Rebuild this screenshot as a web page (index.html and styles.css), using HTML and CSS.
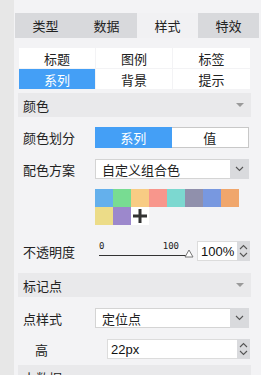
FILE: index.html
```html
<!DOCTYPE html>
<html lang="zh-CN">
<head>
  <meta charset="UTF-8" />
  <title>样式</title>
  <link rel="stylesheet" href="styles.css">
</head>
<body>
  <div class="app">
    <div class="rail"></div>

    <div class="panel">
      <div class="tabs">
        <div class="tab">类型</div>
        <div class="tab">数据</div>
        <div class="tab active">样式</div>
        <div class="tab">特效</div>
      </div>

      <div class="subtabs">
        <div class="subtab">标题</div>
        <div class="subtab">图例</div>
        <div class="subtab">标签</div>
        <div class="subtab active">系列</div>
        <div class="subtab">背景</div>
        <div class="subtab">提示</div>
      </div>

      <div class="section-head">
        <span>颜色</span>
        <span class="caret"></span>
      </div>

      <div class="row row-toggle">
        <div class="label">颜色划分</div>
        <div class="toggle">
          <div class="toggle-item active">系列</div>
          <div class="toggle-item">值</div>
        </div>
      </div>

      <div class="row row-select">
        <div class="label">配色方案</div>
        <div class="select">
          <div class="select-value">自定义组合色</div>
          <div class="select-arrow">
            <svg width="9" height="6" viewBox="0 0 9 6"><path d="M1 1l3.5 3.5L8 1" fill="none" stroke="#555" stroke-width="1.1"/></svg>
          </div>
        </div>
      </div>

      <div class="swatches">
        <div class="swatch" style="background:#64b0ec"></div>
        <div class="swatch" style="background:#78dc92"></div>
        <div class="swatch" style="background:#f8cc84"></div>
        <div class="swatch" style="background:#f8968c"></div>
        <div class="swatch" style="background:#7cd8d0"></div>
        <div class="swatch" style="background:#9090ac"></div>
        <div class="swatch" style="background:#7898e0"></div>
        <div class="swatch" style="background:#f0a66c"></div>
        <div class="swatch" style="background:#ecdc88"></div>
        <div class="swatch" style="background:#9c88cc"></div>
        <div class="swatch add">
          <svg width="14" height="14" viewBox="0 0 14 14"><path d="M7 0v14M0 7h14" stroke="#333" stroke-width="3"/></svg>
        </div>
      </div>

      <div class="row row-opacity">
        <div class="label">不透明度</div>
        <div class="slider">
          <div class="slider-nums"><span>0</span><span>100</span></div>
          <div class="slider-track">
            <svg class="thumb" width="10" height="9" viewBox="0 0 10 9"><path d="M5 1L9 8H1z" fill="#fff" stroke="#777"/></svg>
          </div>
        </div>
        <div class="spin spin-small">
          <div class="spin-value">100%</div>
          <div class="spin-btns">
            <svg width="9" height="6" viewBox="0 0 9 6"><path d="M1 5l3.5-3.5L8 5" fill="none" stroke="#555" stroke-width="1.1"/></svg>
            <svg width="9" height="6" viewBox="0 0 9 6"><path d="M1 1l3.5 3.5L8 1" fill="none" stroke="#555" stroke-width="1.1"/></svg>
          </div>
        </div>
      </div>

      <div class="section-head">
        <span>标记点</span>
        <span class="caret"></span>
      </div>

      <div class="row row-select">
        <div class="label">点样式</div>
        <div class="select">
          <div class="select-value">定位点</div>
          <div class="select-arrow">
            <svg width="9" height="6" viewBox="0 0 9 6"><path d="M1 1l3.5 3.5L8 1" fill="none" stroke="#555" stroke-width="1.1"/></svg>
          </div>
        </div>
      </div>

      <div class="row row-height">
        <div class="label sub">高</div>
        <div class="spin spin-wide">
          <div class="spin-value">22px</div>
          <div class="spin-btns">
            <svg width="9" height="6" viewBox="0 0 9 6"><path d="M1 5l3.5-3.5L8 5" fill="none" stroke="#555" stroke-width="1.1"/></svg>
            <svg width="9" height="6" viewBox="0 0 9 6"><path d="M1 1l3.5 3.5L8 1" fill="none" stroke="#555" stroke-width="1.1"/></svg>
          </div>
        </div>
      </div>

      <div class="section-head">
        <span>上数据</span>
        <span class="caret"></span>
      </div>
    </div>
  </div>
</body>
</html>
```

FILE: styles.css
```css
* {
  box-sizing: border-box;
}

html, body {
  margin: 0;
  height: 100%;
  overflow: hidden;
}

body {
  font-family: "Noto Sans CJK SC", "Liberation Sans", sans-serif;
  font-size: 13px;
  color: #222;
  background: #f3f3f5;
}

.app {
  display: flex;
  height: 100%;
}

.rail {
  width: 14px;
  flex: none;
  background: #e7e7e7;
}

.panel {
  flex: 1;
  padding: 13px 11px 0 4px;
  background: #f3f3f5;
}

.tabs {
  display: grid;
  grid-template-columns: repeat(4, 61px);
  height: 25px;
  margin: 0 -8px 10px -3px;
  background: #d8d9dc;
}

.tab {
  display: flex;
  align-items: center;
  justify-content: center;
  line-height: 1;
}

.tab.active {
  background: #f1f1f3;
}

.subtabs {
  display: grid;
  grid-template-columns: 76px 76px 77px;
  grid-auto-rows: 20px;
  gap: 1px;
  margin: 0 1px 4px 1px;
}

.subtab {
  display: flex;
  align-items: center;
  justify-content: center;
  background: #fff;
  line-height: 1;
}

.subtab.active {
  background: #449ff6;
  color: #fff;
}

.section-head {
  display: flex;
  align-items: center;
  justify-content: space-between;
  height: 24px;
  padding: 0 7px 0 5px;
  background: #e9e9eb;
  line-height: 1;
}

.caret {
  width: 0;
  height: 0;
  border-left: 4px solid transparent;
  border-right: 4px solid transparent;
  border-top: 4px solid #9a9a9a;
}

.row {
  display: flex;
  align-items: center;
}

.label {
  width: 77px;
  flex: none;
  padding-left: 5px;
  line-height: 1;
}

.label.sub {
  width: 89px;
  padding-left: 17px;
}

.row-toggle {
  margin-top: 10px;
}

.toggle {
  display: flex;
  width: 154px;
  height: 21px;
  border: 1px solid #c8c8c8;
  background: #fff;
}

.toggle-item {
  flex: 1;
  display: flex;
  align-items: center;
  justify-content: center;
  line-height: 1;
}

.toggle-item.active {
  background: #449ff6;
  color: #fff;
  margin: -1px 0 -1px -1px;
}

.row-select {
  margin-top: 11px;
}

.select {
  display: flex;
  width: 154px;
  height: 20px;
  background: #fff;
  border: 1px solid #d4d4d4;
}

.select-value {
  flex: 1;
  display: flex;
  align-items: center;
  padding-left: 6px;
  line-height: 1;
}

.select-arrow {
  width: 19px;
  display: flex;
  align-items: center;
  justify-content: center;
  background: #d9dadd;
  margin: -1px -1px -1px 0;
}

.swatches {
  display: grid;
  grid-template-columns: repeat(8, 18px);
  grid-auto-rows: 18px;
  margin: 10px 0 0 77px;
}

.swatch.add {
  display: flex;
  align-items: center;
  justify-content: center;
  background: #fff;
}

.row-opacity {
  margin-top: 16px;
  height: 20px;
}

.slider {
  position: relative;
  width: 102px;
  height: 20px;
  padding-left: 4px;
}

.slider-nums {
  display: flex;
  justify-content: space-between;
  width: 80px;
  font-family: "DejaVu Sans Mono", monospace;
  font-size: 9px;
  line-height: 1;
  margin-top: 1px;
}

.slider-track {
  position: relative;
  width: 88px;
  height: 1px;
  margin-top: 4px;
  background: #333;
}

.thumb {
  position: absolute;
  right: -7px;
  top: -6px;
}

.spin {
  display: flex;
  height: 20px;
  background: #fff;
  border: 1px solid #dcdcdc;
}

.spin-small {
  width: 53px;
}

.spin-wide {
  width: 143px;
}

.spin-value {
  flex: 1;
  display: flex;
  align-items: center;
  padding-left: 3px;
  font-family: "Liberation Sans", sans-serif;
  font-size: 13px;
  color: #111;
}

.spin-btns {
  width: 13px;
  display: flex;
  flex-direction: column;
  align-items: center;
  justify-content: space-around;
  background: #d9dadd;
  margin: -1px -1px -1px 0;
  padding: 2px 0;
}

.row-opacity + .section-head {
  margin-top: 12px;
}

.row-select + .row-height {
  margin-top: 11px;
}

.row-height + .section-head {
  margin-top: 6px;
}

.row-select:first-of-type {
  margin-top: 10px;
}
```
